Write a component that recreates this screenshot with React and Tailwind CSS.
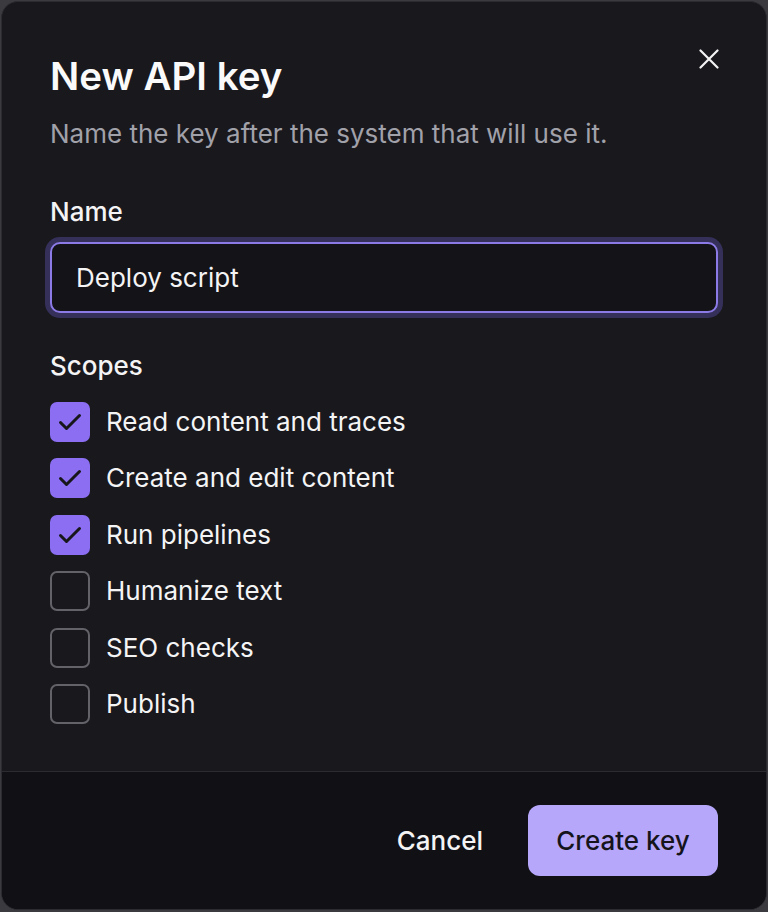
import { useState } from 'react';

const scopes = [
  { id: 'read', label: 'Read content and traces', checked: true },
  { id: 'edit', label: 'Create and edit content', checked: true },
  { id: 'pipelines', label: 'Run pipelines', checked: true },
  { id: 'humanize', label: 'Humanize text', checked: false },
  { id: 'seo', label: 'SEO checks', checked: false },
  { id: 'publish', label: 'Publish', checked: false },
];

const CheckIcon = () => (
  <svg width="40" height="40" viewBox="0 0 40 40" fill="none" stroke="#17161b" strokeWidth="3" strokeLinecap="round" strokeLinejoin="round">
    <path d="M10.5 20.5l6 6L29.5 13.5" />
  </svg>
);

const CloseIcon = () => (
  <svg width="20" height="20" viewBox="0 0 20 20" fill="none" stroke="#f4f4f5" strokeWidth="2.2" strokeLinecap="round">
    <path d="M1.5 1.5l17 17M18.5 1.5l-17 17" />
  </svg>
);

const App = () => {
  const [name, setName] = useState('Deploy script');
  const [checked, setChecked] = useState(
    Object.fromEntries(scopes.map((s) => [s.id, s.checked]))
  );

  return (
    <div className="w-[768px] h-[912px] bg-[#3a3a3f] p-px font-['Inter',sans-serif]">
      <div className="relative flex flex-col h-[909px] rounded-[17px] border border-[#2c2b31] bg-[#19181d] overflow-hidden">
        <button className="absolute right-[47px] top-[47px] text-white">
          <CloseIcon />
        </button>

        {/* Body */}
        <div className="flex-1 px-[48px] pt-[51px]">
          <h2 className="text-[38.5px] leading-[46px] font-semibold text-[#fafafa]">New API key</h2>
          <p className="mt-[21px] text-[26px] leading-[28px] text-[#a1a1aa]">
            Name the key after the system that will use it.
          </p>

          <label htmlFor="key-name" className="block mt-[50px] text-[26px] leading-[28px] font-medium text-[#f4f4f5]">
            Name
          </label>
          <input
            id="key-name"
            type="text"
            value={name}
            onChange={(e) => setName(e.target.value)}
            className="mt-[16px] block w-[668px] h-[71px] rounded-[10px] border-2 border-[#8c7ae6] bg-[#141318] px-[24px] text-[26px] text-[#f4f4f5] outline-none shadow-[0_0_0_5px_#34305a]"
          />

          <div className="mt-[39px] text-[26px] leading-[28px] font-medium text-[#f4f4f5]">Scopes</div>
          <div className="mt-[22px] flex flex-col gap-[16.4px]">
            {scopes.map((scope) => (
              <label key={scope.id} className="flex items-center gap-[16px] cursor-pointer">
                <button
                  type="button"
                  onClick={() => setChecked({ ...checked, [scope.id]: !checked[scope.id] })}
                  className={`flex items-center justify-center w-[40px] h-[40px] rounded-[7px] ${
                    checked[scope.id] ? 'bg-[#8b6ef2]' : 'border-2 border-[#626268]'
                  }`}
                >
                  {checked[scope.id] && <CheckIcon />}
                </button>
                <span className="text-[26px] leading-[28px] text-[#f4f4f5]">{scope.label}</span>
              </label>
            ))}
          </div>
        </div>

        {/* Footer */}
        <div className="flex items-center justify-end gap-[21px] h-[138px] border-t border-[#2c2b31] bg-[#111015] pr-[48px]">
          <button className="px-[24px] h-[71px] text-[26px] font-medium text-[#f4f4f5]">Cancel</button>
          <button className="w-[190px] h-[71px] rounded-[12px] bg-[#b7a7fb] text-[26px] font-medium text-[#15141a]">
            Create key
          </button>
        </div>
      </div>
    </div>
  );
};

export default App;
